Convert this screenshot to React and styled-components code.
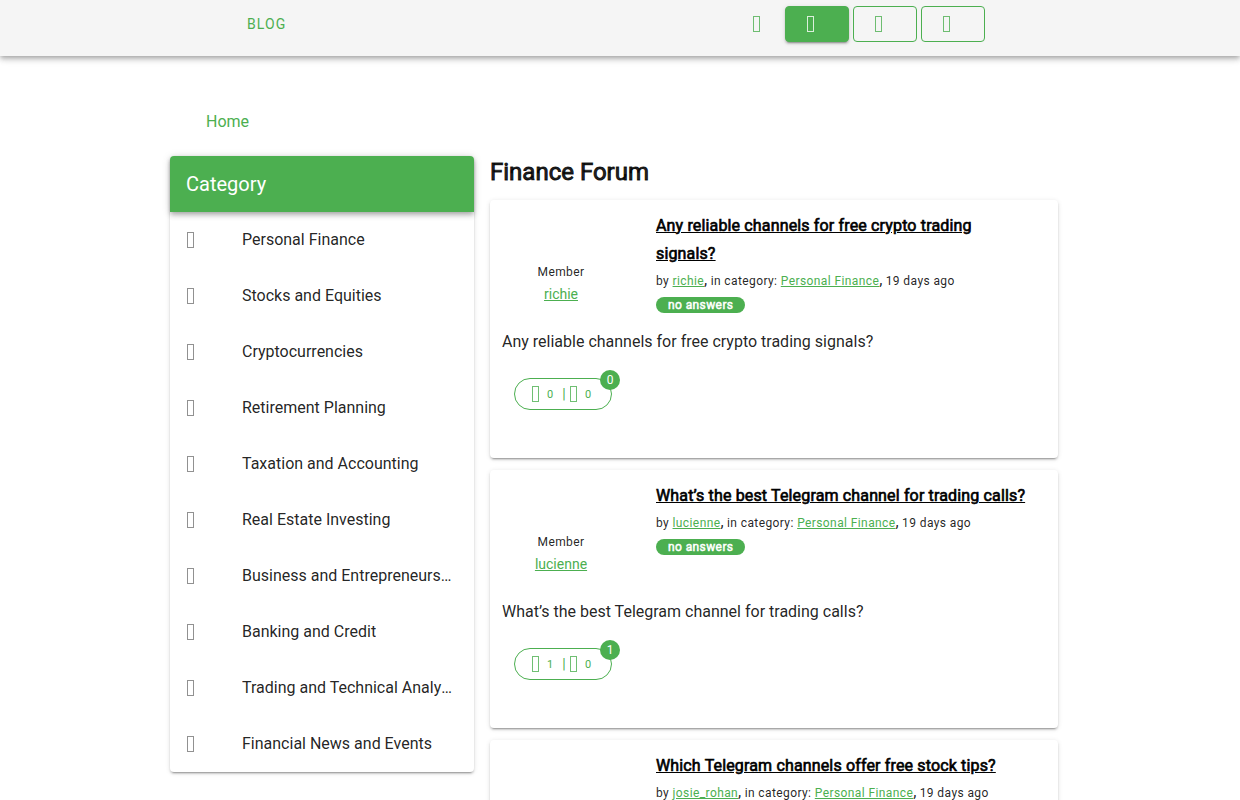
import React from "react";
import styled, { createGlobalStyle } from "styled-components";

const categories = [
  "Personal Finance",
  "Stocks and Equities",
  "Cryptocurrencies",
  "Retirement Planning",
  "Taxation and Accounting",
  "Real Estate Investing",
  "Business and Entrepreneurship",
  "Banking and Credit",
  "Trading and Technical Analysis",
  "Financial News and Events",
];

const posts = [
  {
    title: "Any reliable channels for free crypto trading signals?",
    author: "richie",
    likes: 0,
    dislikes: 0,
    total: 0,
  },
  {
    title: "What’s the best Telegram channel for trading calls?",
    author: "lucienne",
    likes: 1,
    dislikes: 0,
    total: 1,
  },
  {
    title: "Which Telegram channels offer free stock tips?",
    author: "josie_rohan",
    likes: 0,
    dislikes: 0,
    total: 0,
  },
];

function Glyph() {
  return (
    <GlyphSvg viewBox="0 0 8 16" aria-hidden="true">
      <rect x="1.5" y="0.5" width="6" height="15" />
    </GlyphSvg>
  );
}

function Post({ post }) {
  return (
    <Card>
      <CardTop>
        <Member>
          <Role>Member</Role>
          <MemberLink href="#">{post.author}</MemberLink>
        </Member>
        <Summary>
          <PostTitle>
            <a href="#">{post.title}</a>
          </PostTitle>
          <Meta>
            <Caption>
              by <a href="#">{post.author}</a>
            </Caption>
            ,
            <Caption>
              {" "}
              in category: <a href="#">Personal Finance</a>
            </Caption>
            ,<Caption> 19 days ago</Caption>
          </Meta>
          <Answers>no answers</Answers>
        </Summary>
      </CardTop>
      <Body>{post.title}</Body>
      <VoteWrap>
        <Vote type="button" aria-label="Votes">
          <Glyph />
          <Count>{post.likes}</Count>
          <Divider>|</Divider>
          <Glyph />
          <Count>{post.dislikes}</Count>
        </Vote>
        <Total>{post.total}</Total>
      </VoteWrap>
    </Card>
  );
}

function App() {
  return (
    <>
      <GlobalStyle />
      <Header>
        <Toolbar>
          <BlogLink href="#">Blog</BlogLink>
          <Actions>
            <IconButton type="button" aria-label="Search">
              <Glyph />
            </IconButton>
            <ActionButton type="button" aria-label="Ask" $filled>
              <Glyph />
            </ActionButton>
            <ActionButton type="button" aria-label="Log in">
              <Glyph />
            </ActionButton>
            <ActionButton type="button" aria-label="Register">
              <Glyph />
            </ActionButton>
          </Actions>
        </Toolbar>
      </Header>
      <Container>
        <Breadcrumbs aria-label="Breadcrumb">
          <a href="#">Home</a>
        </Breadcrumbs>
        <Columns>
          <Sidebar>
            <SidebarTitle>Category</SidebarTitle>
            {categories.map((name) => (
              <CategoryLink href="#" key={name}>
                <Glyph />
                <CategoryName>{name}</CategoryName>
              </CategoryLink>
            ))}
          </Sidebar>
          <main>
            <Heading>Finance Forum</Heading>
            <PostList>
              {posts.map((post) => (
                <Post post={post} key={post.title} />
              ))}
            </PostList>
          </main>
        </Columns>
      </Container>
    </>
  );
}

const GlobalStyle = createGlobalStyle`
  * {
    box-sizing: border-box;
  }
  body {
    margin: 0;
    background-color: #fff;
    color: rgba(0, 0, 0, 0.87);
    font-family: Roboto, sans-serif;
    font-size: 16px;
    line-height: 24px;
  }
  a {
    color: #4caf50;
  }
  button {
    font-family: inherit;
    cursor: pointer;
  }
`;

const GlyphSvg = styled.svg`
  flex: none;
  width: 8px;
  height: 16px;
  fill: none;
  stroke: currentColor;
  stroke-opacity: 0.8;
`;

const Header = styled.header`
  height: 56px;
  background-color: #f5f5f5;
  box-shadow:
    0 2px 4px -1px rgba(0, 0, 0, 0.2),
    0 4px 5px 0 rgba(0, 0, 0, 0.14),
    0 1px 10px 0 rgba(0, 0, 0, 0.12);
`;
const Toolbar = styled.div`
  max-width: 900px;
  height: 48px;
  margin: 0 auto;
  padding: 0 85px 0 61px;
  display: flex;
  align-items: center;
  justify-content: space-between;
`;
const BlogLink = styled.a`
  padding: 0 16px;
  font-size: 14px;
  letter-spacing: 0.08em;
  text-transform: uppercase;
  text-decoration: none;
`;
const Actions = styled.div`
  display: flex;
  gap: 4px;
`;
const IconButton = styled.button`
  height: 36px;
  padding: 0 21px;
  display: flex;
  align-items: center;
  border: none;
  background: none;
  color: #4caf50;
`;
const ActionButton = styled.button`
  width: 64px;
  height: 36px;
  padding: 0 20px;
  display: flex;
  align-items: center;
  border: 1px solid #4caf50;
  border-radius: 4px;
  background-color: ${(props) => (props.$filled ? "#4caf50" : "transparent")};
  color: ${(props) => (props.$filled ? "#fff" : "#4caf50")};
  box-shadow: ${(props) =>
    props.$filled
      ? "0 3px 1px -2px rgba(0, 0, 0, 0.2), 0 2px 2px 0 rgba(0, 0, 0, 0.14), 0 1px 5px 0 rgba(0, 0, 0, 0.12)"
      : "none"};
`;

const Container = styled.div`
  max-width: 900px;
  margin: 0 auto;
  padding: 36px 12px 24px 0;
`;
const Breadcrumbs = styled.nav`
  padding: 18px 36px 22px;

  a {
    text-decoration: none;
  }
`;
const Columns = styled.div`
  display: grid;
  grid-template-columns: minmax(0, 304fr) minmax(0, 568fr);
  gap: 16px;
  align-items: start;
`;

const Sidebar = styled.nav`
  border-radius: 4px;
  background-color: #fff;
  box-shadow:
    0 3px 1px -2px rgba(0, 0, 0, 0.2),
    0 2px 2px 0 rgba(0, 0, 0, 0.14),
    0 1px 5px 0 rgba(0, 0, 0, 0.12);
`;
const SidebarTitle = styled.div`
  height: 56px;
  padding: 0 16px;
  display: flex;
  align-items: center;
  border-radius: 4px 4px 0 0;
  background-color: #4caf50;
  color: #fff;
  font-size: 20px;
  box-shadow:
    0 2px 4px -1px rgba(0, 0, 0, 0.2),
    0 4px 5px 0 rgba(0, 0, 0, 0.14),
    0 1px 10px 0 rgba(0, 0, 0, 0.12);
`;
const CategoryLink = styled.a`
  height: 56px;
  padding: 0 16px;
  display: flex;
  align-items: center;
  gap: 48px;
  color: rgba(0, 0, 0, 0.54);
  text-decoration: none;
`;
const CategoryName = styled.span`
  color: rgba(0, 0, 0, 0.87);
  overflow: hidden;
  text-overflow: ellipsis;
  white-space: nowrap;
`;

const Heading = styled.h1`
  margin: 0 0 12px;
  font-size: 24px;
  font-weight: 400;
  line-height: 32px;
  -webkit-text-stroke: 0.04em currentColor;
`;
const PostList = styled.div`
  display: flex;
  flex-direction: column;
  gap: 12px;
`;
const Card = styled.article`
  padding-bottom: 48px;
  border-radius: 4px;
  background-color: #fff;
  box-shadow:
    0 3px 1px -2px rgba(0, 0, 0, 0.2),
    0 2px 2px 0 rgba(0, 0, 0, 0.14),
    0 1px 5px 0 rgba(0, 0, 0, 0.12);
`;
const CardTop = styled.div`
  min-height: 130px;
  display: grid;
  grid-template-columns: 1fr 3fr;
`;
const Member = styled.div`
  /* room for the avatar */
  padding-top: 62px;
  display: flex;
  flex-direction: column;
  align-items: center;
`;
const Role = styled.span`
  font-size: 12px;
  line-height: 20px;
  letter-spacing: 0.0333333333em;
`;
const MemberLink = styled.a`
  font-size: 14px;
`;
const Summary = styled.div`
  padding: 12px 24px;
`;
const PostTitle = styled.h2`
  margin: 0;
  font-size: 16px;
  font-weight: 400;
  line-height: 28px;
  letter-spacing: 0.009375em;
  -webkit-text-stroke: 0.04em currentColor;

  a {
    color: #000;
  }
`;
const Meta = styled.div`
  margin-bottom: 4px;
`;
const Caption = styled.span`
  font-size: 12px;
  letter-spacing: 0.0333333333em;
`;
const Answers = styled.span`
  width: fit-content;
  height: 16px;
  padding: 0 12px;
  display: block;
  border-radius: 8px;
  background-color: #4caf50;
  color: #fff;
  font-size: 12px;
  line-height: 16px;
  letter-spacing: 0.0333333333em;
  -webkit-text-stroke: 0.04em currentColor;
`;
const Body = styled.p`
  margin: 0;
  padding: 0 12px;
`;
const VoteWrap = styled.div`
  position: relative;
  width: fit-content;
  margin: 24px 0 0 24px;
`;
const Vote = styled.button`
  height: 32px;
  padding: 0 14px 0 16px;
  display: flex;
  align-items: center;
  border: 1px solid #4caf50;
  border-radius: 16px;
  background: none;
  color: #4caf50;
`;
const Count = styled.span`
  width: 20px;
  padding-left: 8px;
  font-size: 11px;
  text-align: left;
`;
const Divider = styled.span`
  width: 10px;
  font-size: 14px;
`;
const Total = styled.span`
  position: absolute;
  top: -8px;
  right: -8px;
  width: 20px;
  height: 20px;
  border-radius: 10px;
  background-color: #4caf50;
  color: #fff;
  font-size: 12px;
  line-height: 20px;
  text-align: center;
`;

export default App;
